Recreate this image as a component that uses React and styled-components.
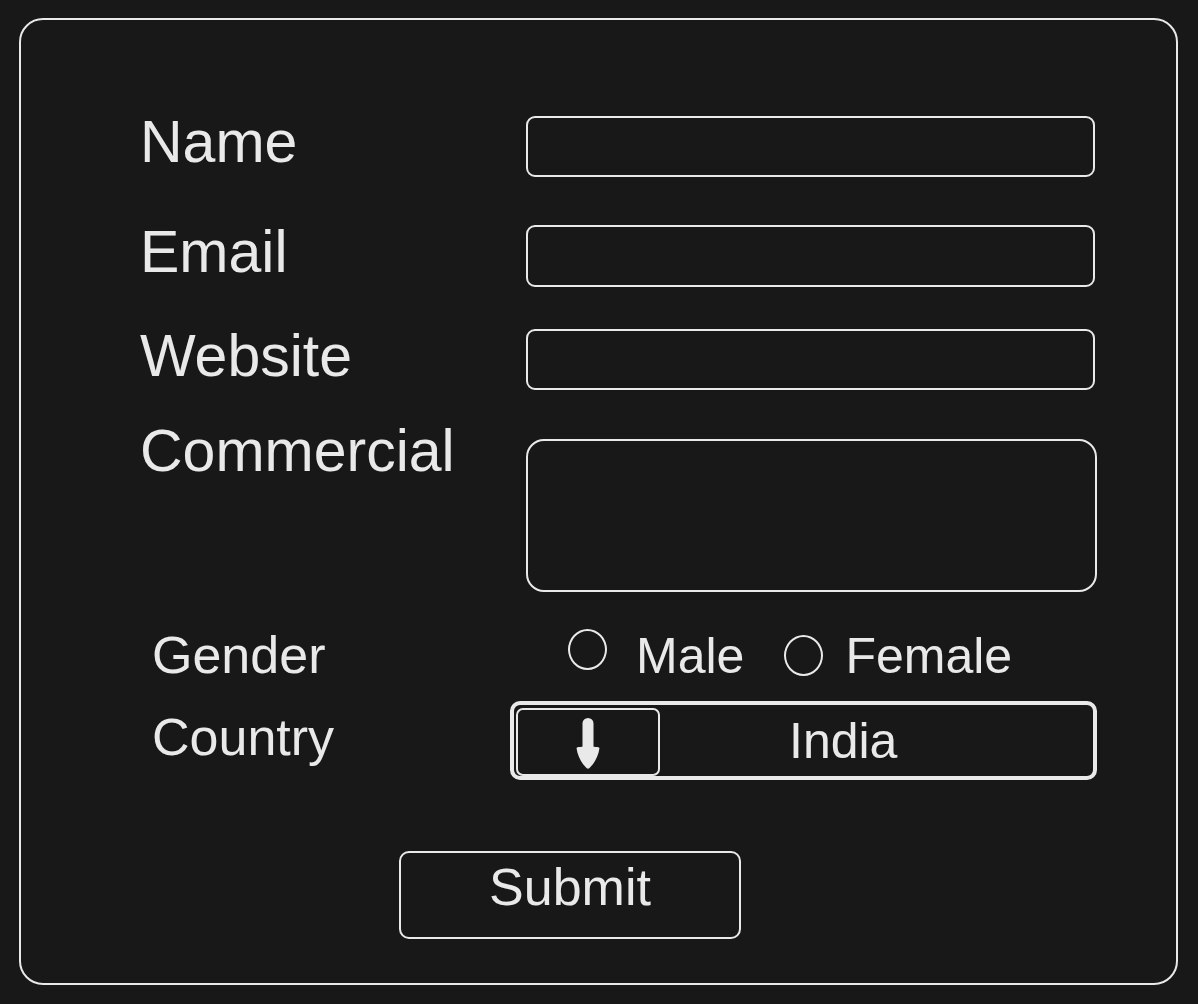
import React from "react";
import styled, { createGlobalStyle } from "styled-components";

const INK = "#e9e9e9";
const BG = "#181818";

const Global = createGlobalStyle`
  html, body {
    margin: 0;
    padding: 0;
    background: ${BG};
    font-family: "Liberation Sans", Arial, sans-serif;
    color: ${INK};
  }
  * { box-sizing: border-box; }
`;

const Card = styled.form`
  margin: 18px 0 0 19px;
  width: 1159px;
  height: 967px;
  border: 2px solid ${INK};
  border-radius: 24px;
  padding: 93px 0 0 119px;
  display: flex;
  flex-direction: column;
`;

const Row = styled.div`
  display: grid;
  grid-template-columns: 370px auto;
  align-items: start;
  margin-top: ${(p) => p.$gap || 0}px;
`;

const Label = styled.label`
  font-size: ${(p) => p.$size || 59}px;
  line-height: ${(p) => p.$size || 59}px;
  margin-top: ${(p) => p.$offset || 0}px;
  padding-left: ${(p) => p.$indent || 0}px;
  white-space: nowrap;
`;

const TextInput = styled.input`
  display: block;
  margin: ${(p) => p.$offset || 0}px 0 0 16px;
  width: 569px;
  height: ${(p) => p.$h || 61}px;
  background: transparent;
  border: 2px solid ${INK};
  border-radius: 9px;
  outline: none;
  color: ${INK};
  font: inherit;
`;

const TextArea = styled.textarea`
  display: block;
  margin: 17px 0 0 16px;
  width: 571px;
  height: 153px;
  background: transparent;
  border: 2px solid ${INK};
  border-radius: 18px;
  outline: none;
  resize: none;
  color: ${INK};
  font: inherit;
`;

const RadioGroup = styled.div`
  display: flex;
  align-items: flex-start;
  margin-left: 58px;
`;

const RadioOption = styled.label`
  display: flex;
  align-items: flex-start;
  gap: ${(p) => p.$gap}px;
  margin-right: ${(p) => p.$after || 0}px;
`;

const Circle = styled.span`
  display: block;
  width: 39px;
  height: 41px;
  border: 2px solid ${INK};
  border-radius: 50%;
  margin-top: ${(p) => p.$offset || 0}px;
`;

const OptionText = styled.span`
  font-size: 50px;
  line-height: 50px;
  margin-top: ${(p) => p.$offset || 0}px;
`;

const Select = styled.div`
  display: flex;
  align-items: flex-start;
  width: 587px;
  height: 79px;
  border: 4px solid ${INK};
  border-radius: 10px;
  padding: 3px 0 0 2px;
`;

const SelectButton = styled.button`
  display: flex;
  justify-content: center;
  align-items: flex-start;
  width: 144px;
  height: 68px;
  padding: 8px 0 0 0;
  background: transparent;
  border: 2px solid ${INK};
  border-radius: 7px;
  color: ${INK};
`;

const SelectValue = styled.span`
  font-size: 50px;
  line-height: 50px;
  margin: 8px 0 0 129px;
`;

const SubmitRow = styled.div`
  margin: 71px 0 0 259px;
`;

const SubmitButton = styled.button`
  display: flex;
  justify-content: center;
  align-items: flex-start;
  width: 342px;
  height: 88px;
  padding: 8px 0 0 0;
  background: transparent;
  border: 2px solid ${INK};
  border-radius: 10px;
  color: ${INK};
  font-family: "Liberation Sans", Arial, sans-serif;
  font-size: 52px;
  line-height: 52px;
`;

const ArrowDown = () => (
  <svg width="24" height="52" viewBox="0 0 24 52" fill={INK}>
    <rect x="6.5" y="0" width="11" height="38" rx="5.5" />
    <path d="M0.5 30 C1 28 23 28 23.5 30 C22.5 39 17 47 13.2 50.2 C12.5 50.8 11.5 50.8 10.8 50.2 C7 47 1.5 39 0.5 30 Z" />
  </svg>
);

export default function App() {
  return (
    <>
      <Global />
      <Card onSubmit={(e) => e.preventDefault()}>
        <Row>
          <Label>Name</Label>
          <TextInput $offset={3} $h={61} />
        </Row>
        <Row $gap={46}>
          <Label>Email</Label>
          <TextInput $offset={2} $h={62} />
        </Row>
        <Row $gap={40}>
          <Label>Website</Label>
          <TextInput $offset={2} $h={61} />
        </Row>
        <Row $gap={32}>
          <Label>Commercial</Label>
          <TextArea />
        </Row>
        <Row $gap={37}>
          <Label $size={52} $indent={12}>Gender</Label>
          <RadioGroup>
            <RadioOption $gap={29} $after={40}>
              <Circle />
              <OptionText $offset={2}>Male</OptionText>
            </RadioOption>
            <RadioOption $gap={22}>
              <Circle $offset={6} />
              <OptionText $offset={2}>Female</OptionText>
            </RadioOption>
          </RadioGroup>
        </Row>
        <Row $gap={20}>
          <Label $size={52} $indent={12} $offset={10}>Country</Label>
          <Select>
            <SelectButton type="button" aria-label="Open">
              <ArrowDown />
            </SelectButton>
            <SelectValue>India</SelectValue>
          </Select>
        </Row>
        <SubmitRow>
          <SubmitButton type="submit">Submit</SubmitButton>
        </SubmitRow>
      </Card>
    </>
  );
}
